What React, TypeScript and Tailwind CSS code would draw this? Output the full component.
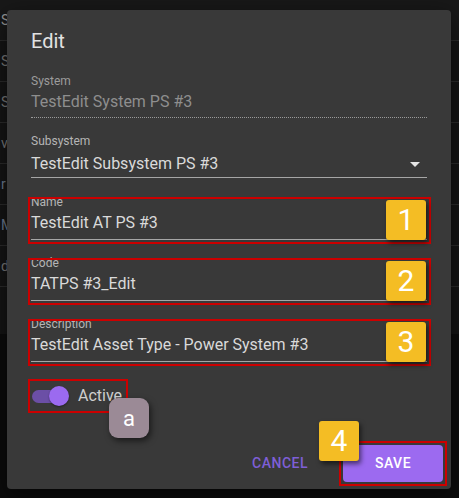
import React from 'react';

const rows = [
  { t: 'S', c: 'text-[#9a9a9a]' },
  { t: 'Su', c: 'text-[#7d7d7d]' },
  { t: 'Su', c: 'text-[#7d7d7d]' },
  { t: 'v', c: 'text-[#7d7d7d]' },
  { t: 'r', c: 'text-[#6f7f95]' },
  { t: 'M', c: 'text-[#6f7f95]' },
  { t: 'd', c: 'text-[#7d7d7d]' },
  { t: '', c: '' },
];

// yellow numbered callout used on the screenshot annotations
function Badge({ label, className }: { label: string; className: string }) {
  return (
    <div
      className={`absolute w-[40px] h-[40px] rounded-[3px] bg-[#f4bd24] text-white text-[30px] leading-none flex items-center justify-center shadow-[2px_3px_5px_rgba(0,0,0,0.55)] ${className}`}
    >
      {label}
    </div>
  );
}

function Field({ label, value, badge }: { label: string; value: string; badge: string }) {
  return (
    <div className="relative flex flex-col h-[45px] border-b border-[#a6a6a6]">
      <div className="h-[14px] leading-[14px] text-[12px] text-[#b5b5b5]">{label}</div>
      <div className="mt-[2px] h-[24px] leading-[24px] text-[16px] text-[#dadada]">{value}</div>
      <div className="absolute left-[-3px] right-[-4px] top-[2px] bottom-[-5px] border-2 border-[#cc0000]" />
      <Badge label={badge} className="right-[1px] top-[5px]" />
    </div>
  );
}

export default function App() {
  return (
    <div
      className="relative w-[459px] h-[498px] overflow-hidden bg-[#0c0c0c]"
      style={{ fontFamily: 'Roboto, "Liberation Sans", sans-serif' }}
    >
      {/* table behind the modal */}
      <div className="flex flex-col bg-[#151515]">
        {rows.map((r, i) => (
          <div
            key={i}
            className={`h-[41px] ${i === 0 ? 'h-[40px] bg-[#181818]' : ''} ${i === 7 ? 'h-[47px] border-b-0' : 'border-b border-[#2c2c2c]'} flex items-center pl-[1px] text-[14px] ${r.c}`}
          >
            {r.t}
          </div>
        ))}
      </div>

      {/* dialog */}
      <div className="absolute left-[7px] top-[10px] w-[444px] h-[479px] rounded-[4px] bg-[#393939] px-[24px] pt-[15px] shadow-[0_8px_24px_rgba(0,0,0,0.6)]">
        <div className="h-[32px] leading-[32px] text-[20px] text-[#e2e2e2]">Edit</div>

        <div className="mt-[17px] flex flex-col pb-[3px] border-b border-dotted border-[#9a9a9a]">
          <div className="h-[14px] leading-[14px] text-[12px] text-[#9c9c9c]">System</div>
          <div className="mt-[2px] h-[24px] leading-[24px] text-[16px] text-[#8e8e8e]">TestEdit System PS #3</div>
        </div>

        <div className="mt-[16px] flex flex-col pb-[1px] border-b border-[#a6a6a6]">
          <div className="h-[14px] leading-[14px] text-[12px] text-[#b5b5b5]">Subsystem</div>
          <div className="mt-[4px] h-[24px] flex items-center justify-between text-[16px] text-[#dadada]">
            <span>TestEdit Subsystem PS #3</span>
            <svg width="10" height="5" viewBox="0 0 10 5" className="mr-[7px]">
              <path d="M0 0 L10 0 L5 5 Z" fill="#e6e6e6" />
            </svg>
          </div>
        </div>

        <div className="mt-[17px] flex flex-col gap-[16px]">
          <Field label="Name" value="TestEdit AT PS #3" badge="1" />
          <Field label="Code" value="TATPS #3_Edit" badge="2" />
          <Field label="Description" value="TestEdit Asset Type - Power System #3" badge="3" />
        </div>

        <div className="relative mt-[17px] flex items-center h-[34px] w-[100px] -ml-[3px] border-2 border-[#cc0000] pl-[2px]">
          <div className="relative w-[34px] h-[20px] flex items-center">
            <div className="w-[28px] h-[13px] rounded-full bg-[#6b4fa6]" />
            <div className="absolute left-[17px] w-[20px] h-[20px] rounded-full bg-[#9b6af0] shadow-[0_1px_2px_rgba(0,0,0,0.4)]" />
          </div>
          <span className="ml-[12px] text-[16px] text-[#cfcfcf]">Active</span>
          <div className="absolute left-[79px] top-[17px] w-[40px] h-[40px] rounded-[9px] bg-[#9b8a96] text-white text-[22px] flex items-center justify-center shadow-[2px_3px_6px_rgba(0,0,0,0.55)]">
            a
          </div>
        </div>

        <div className="absolute left-0 right-0 bottom-[3px] flex items-center justify-end gap-[31px] pr-[4px]">
          <span className="text-[14px] font-medium tracking-[0.5px] text-[#7e5fd6]">CANCEL</span>
          <div className="relative border-2 border-[#cc0000] p-[2px]">
            <div className="w-[100px] h-[37px] rounded-[4px] bg-[#9c6af0] flex items-center justify-center text-[14px] font-medium tracking-[0.5px] text-white">
              SAVE
            </div>
            <Badge label="4" className="left-[-22px] top-[-22px]" />
          </div>
        </div>
      </div>
    </div>
  );
}
